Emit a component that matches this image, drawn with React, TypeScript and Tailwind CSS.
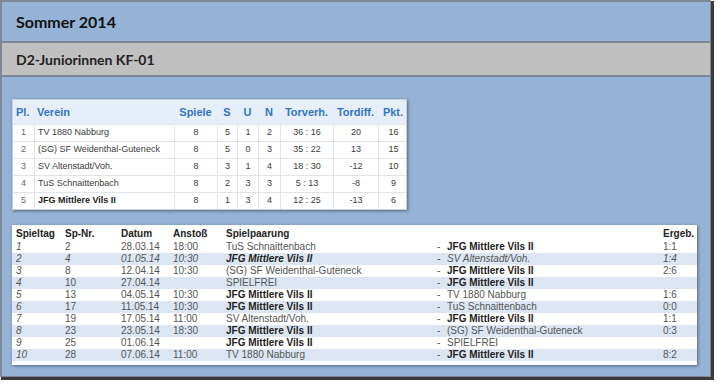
import React from "react";

const standings = [
  { pl: 1, v: "TV 1880 Nabburg", sp: 8, s: 5, u: 1, n: 2, tv: "36 : 16", td: "20", p: 16 },
  { pl: 2, v: "(SG) SF Weidenthal-Guteneck", sp: 8, s: 5, u: 0, n: 3, tv: "35 : 22", td: "13", p: 15 },
  { pl: 3, v: "SV Altenstadt/Voh.", sp: 8, s: 3, u: 1, n: 4, tv: "18 : 30", td: "-12", p: 10 },
  { pl: 4, v: "TuS Schnaittenbach", sp: 8, s: 2, u: 3, n: 3, tv: "5 : 13", td: "-8", p: 9 },
  { pl: 5, v: "JFG Mittlere Vils II", sp: 8, s: 1, u: 3, n: 4, tv: "12 : 25", td: "-13", p: 6, bold: true },
];

const J = "JFG Mittlere Vils II";
const matches = [
  ["1", "2", "28.03.14", "18:00", "TuS Schnaittenbach", J, "1:1"],
  ["2", "4", "01.05.14", "10:30", J, "SV Altenstadt/Voh.", "1:4"],
  ["3", "8", "12.04.14", "10:30", "(SG) SF Weidenthal-Guteneck", J, "2:6"],
  ["4", "10", "27.04.14", "", "SPIELFREI", J, ""],
  ["5", "13", "04.05.14", "10:30", J, "TV 1880 Nabburg", "1:6"],
  ["6", "17", "11.05.14", "10:30", J, "TuS Schnaittenbach", "0:0"],
  ["7", "19", "17.05.14", "11:00", "SV Altenstadt/Voh.", J, "1:1"],
  ["8", "23", "23.05.14", "18:30", J, "(SG) SF Weidenthal-Guteneck", "0:3"],
  ["9", "25", "01.06.14", "", J, "SPIELFREI", ""],
  ["10", "28", "07.06.14", "11:00", "TV 1880 Nabburg", J, "8:2"],
];

const stCols = "grid grid-cols-[21px_140px_43px_20px_21px_22px_53px_45px_30px]";
const mCols = "grid grid-cols-[49px_56px_52px_53px_209px_12px_216px_38px]";

export default function App() {
  return (
    <div className="w-[721px] h-[386px] bg-white">
      <div className="w-[711px] h-[377px] border-l-2 border-t-2 border-r border-b border-[#7f8694] shadow-[2px_2px_0_1px_#3a3a3a] bg-[#95b3d7] flex flex-col">
        <div className="h-[39px] flex items-center pl-[14px] pt-[1px]" style={{ fontFamily: "Lato, 'Open Sans', sans-serif" }}>
          <span className="text-[16px] font-bold text-[#111]">Sommer 2014</span>
        </div>
        <div className="h-[36px] bg-[#c0c0c0] border-y-2 border-[#7f8694] flex items-center pl-[14px]" style={{ fontFamily: "Lato, 'Open Sans', sans-serif" }}>
          <span className="text-[14px] font-bold text-[#222]">D2-Juniorinnen KF-01</span>
        </div>
        <div className="flex flex-col items-start pl-[10px] pt-[22px]" style={{ fontFamily: "'Liberation Sans', Arial, sans-serif" }}>
          <div className="w-[395px] bg-white border border-[#c9d2dc] shadow-[1px_1px_3px_rgba(0,0,0,0.45)]">
            <div className={`${stCols} h-[24px] items-center bg-[#e6eff9] text-[11px] font-bold text-[#3474c4]`}>
              <div className="pl-[3px]">Pl.</div>
              <div className="pl-[3px]">Verein</div>
              <div className="text-center">Spiele</div>
              <div className="text-center">S</div>
              <div className="text-center">U</div>
              <div className="text-center">N</div>
              <div className="text-center">Torverh.</div>
              <div className="text-center">Tordiff.</div>
              <div className="text-center">Pkt.</div>
            </div>
            {standings.map((r) => (
              <div key={r.pl} className={`${stCols} h-[17px] border-t border-[#dfe4ea] text-[9px] text-[#3a3a3a]`}>
                <div className="flex items-center justify-center text-[#666]">{r.pl}</div>
                <div className={`flex items-center pl-[3px] border-l border-[#dfe4ea] ${r.bold ? "font-bold text-[#222]" : ""}`}>{r.v}</div>
                <div className="flex items-center justify-center border-l border-[#dfe4ea]">{r.sp}</div>
                <div className="flex items-center justify-center border-l border-[#dfe4ea]">{r.s}</div>
                <div className="flex items-center justify-center border-l border-[#dfe4ea]">{r.u}</div>
                <div className="flex items-center justify-center border-l border-[#dfe4ea]">{r.n}</div>
                <div className="flex items-center justify-center border-l border-[#dfe4ea]">{r.tv}</div>
                <div className="flex items-center justify-center border-l border-[#dfe4ea]">{r.td}</div>
                <div className="flex items-center justify-center border-l border-[#dfe4ea]">{r.p}</div>
              </div>
            ))}
          </div>
          <div className="mt-[15px] w-[685px] bg-white shadow-[1px_1px_3px_rgba(0,0,0,0.45)] pl-[4px] pb-[4px] text-[10px] leading-[12px] text-[#555]">
            <div className={`${mCols} pt-[3px] h-[16px] font-bold text-[#222]`}>
              <div>Spieltag</div>
              <div>Sp-Nr.</div>
              <div>Datum</div>
              <div>Anstoß</div>
              <div>Spielpaarung</div>
              <div></div>
              <div></div>
              <div>Ergeb.</div>
            </div>
            {matches.map((m, i) => {
              const even = i % 2 === 1;
              const allItalic = i === 1;
              return (
                <div key={i} className={`${mCols} h-[12px] -ml-[4px] pl-[4px] ${even ? "bg-[#dce6f2]" : ""} ${allItalic ? "italic" : ""}`}>
                  <div className="italic">{m[0]}</div>
                  <div>{m[1]}</div>
                  <div>{m[2]}</div>
                  <div>{m[3]}</div>
                  <div className={m[4] === J ? "font-bold text-[#222]" : ""}>{m[4]}</div>
                  <div className="pl-[2px]">-</div>
                  <div className={m[5] === J ? "font-bold text-[#222]" : ""}>{m[5]}</div>
                  <div>{m[6]}</div>
                </div>
              );
            })}
          </div>
        </div>
      </div>
    </div>
  );
}
